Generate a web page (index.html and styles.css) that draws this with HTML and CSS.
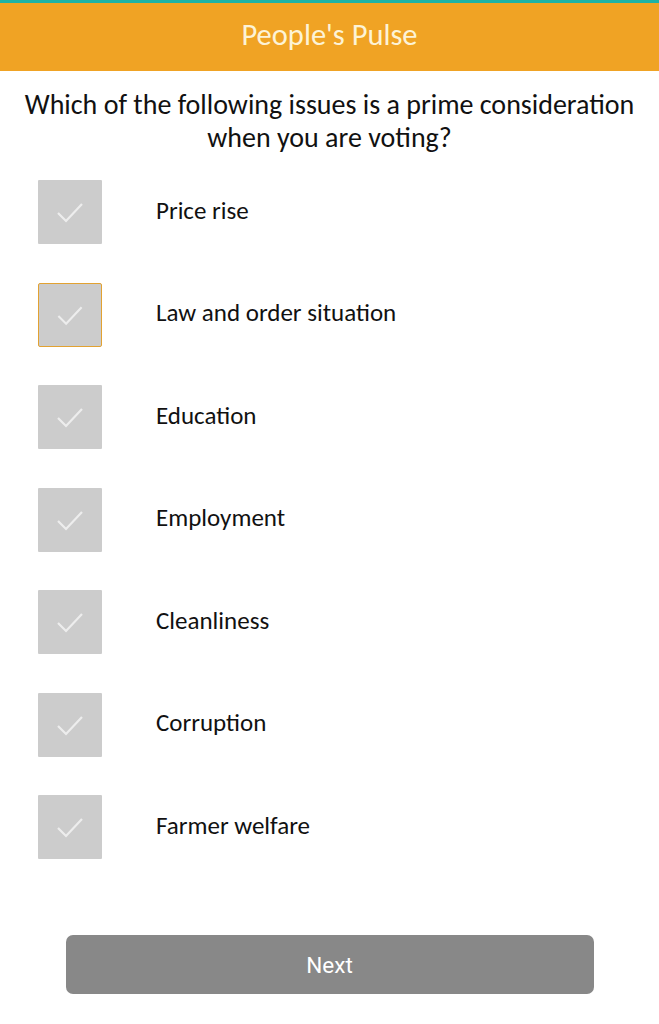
FILE: index.html
```html
<!DOCTYPE html>
<html lang="en">
<head>
    <meta charset="UTF-8">
    <meta name="viewport" content="width=device-width, initial-scale=1.0">
    <title>People's Pulse</title>
    <link rel="stylesheet" href="styles.css">
</head>
<body>
    <div class="header">People's Pulse</div>

    <p class="question">Which of the following issues is a prime consideration<br>when you are voting?</p>

    <div class="options">
        <div class="option">
            <span class="box"><svg viewBox="0 0 64 64"><path d="M20 33 L28 41 L44 24"/></svg></span>
            <span class="label">Price rise</span>
        </div>
        <div class="option">
            <span class="box active"><svg viewBox="0 0 64 64"><path d="M20 33 L28 41 L44 24"/></svg></span>
            <span class="label">Law and order situation</span>
        </div>
        <div class="option">
            <span class="box"><svg viewBox="0 0 64 64"><path d="M20 33 L28 41 L44 24"/></svg></span>
            <span class="label">Education</span>
        </div>
        <div class="option">
            <span class="box"><svg viewBox="0 0 64 64"><path d="M20 33 L28 41 L44 24"/></svg></span>
            <span class="label">Employment</span>
        </div>
        <div class="option">
            <span class="box"><svg viewBox="0 0 64 64"><path d="M20 33 L28 41 L44 24"/></svg></span>
            <span class="label">Cleanliness</span>
        </div>
        <div class="option">
            <span class="box"><svg viewBox="0 0 64 64"><path d="M20 33 L28 41 L44 24"/></svg></span>
            <span class="label">Corruption</span>
        </div>
        <div class="option">
            <span class="box"><svg viewBox="0 0 64 64"><path d="M20 33 L28 41 L44 24"/></svg></span>
            <span class="label">Farmer welfare</span>
        </div>
    </div>

    <div class="footer">
        <button class="next">Next</button>
    </div>
</body>
</html>
```

FILE: styles.css
```css
body {
    margin: 0;
    font-family: 'Carlito', 'Lato', sans-serif;
    color: #111;
    background-color: #fff;
}

.header {
    border-top: 3px solid #1cb3a6; /* teal status strip */
    height: 68px;
    line-height: 64px;
    background-color: #f0a324;
    color: #fdf3d6;
    text-align: center;
    font-size: 30.5px;
}

.question {
    margin: 17px 5px 0;
    font-size: 28px;
    line-height: 33px;
    text-align: center;
}

.options {
    display: flex;
    flex-direction: column;
    gap: 38.5px;
    margin-top: 26px;
    padding-left: 38px;
}

.option {
    display: flex;
    align-items: center;
}

.box {
    width: 64px;
    height: 64px;
    box-sizing: border-box;
    background-color: #cccccc;
    border-radius: 1px;
    display: flex;
}

.box.active {
    border: 1.5px solid #e2a232;
    border-radius: 2px;
}

.box svg {
    width: 100%;
    height: 100%;
}

.box path {
    fill: none;
    stroke: #ededed;
    stroke-width: 2.2;
}

.label {
    margin-left: 54px;
    font-size: 25px;
    margin-top: -4px;
}

.footer {
    display: flex;
    justify-content: center;
    margin-top: 76px;
}

.next {
    width: 528px;
    height: 59px;
    border: none;
    border-radius: 7px;
    background-color: #888888;
    color: #fff;
    font-family: 'Roboto', sans-serif;
    font-size: 22.5px;
}
```
